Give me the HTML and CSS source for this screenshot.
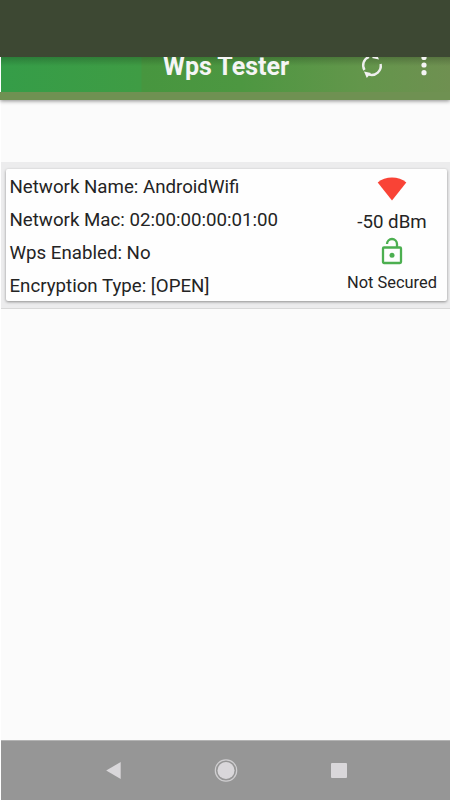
FILE: index.html
```
<!DOCTYPE html>
<html lang="en">
<head>
    <meta charset="UTF-8">
    <meta name="viewport" content="width=device-width, initial-scale=1.0">
    <title>Wps Tester</title>
    <link rel="stylesheet" href="styles.css">
</head>
<body>
    <div class="screen">
        <div class="status-bar"></div>

        <header class="toolbar">
            <div class="toolbar-main">
                <h1>Wps Tester</h1>
                <svg class="refresh-icon" width="28" height="30" viewBox="0 0 28 30">
                    <path class="arc" d="M7.500 19A9 9 0 0 1 12 5.800M23.600 13A9.200 9.200 0 0 1 12 23.600"/>
                    <path class="head" d="M7 20.500L14 22L9.800 27ZM22 8.500L15 7L19.200 2Z"/>
                </svg>
                <svg class="menu-icon" width="6" height="24" viewBox="0 0 6 24">
                    <circle cx="3" cy="4.500" r="2.600"/>
                    <circle cx="3" cy="12" r="2.600"/>
                    <circle cx="3" cy="19.700" r="2.600"/>
                </svg>
            </div>
            <div class="toolbar-strip"></div>
        </header>

        <main class="content">
            <div class="list-item">
                <div class="card">
                    <div class="details">
                        <p>Network Name: AndroidWifi</p>
                        <p>Network Mac: 02:00:00:00:01:00</p>
                        <p>Wps Enabled: No</p>
                        <p>Encryption Type: [OPEN]</p>
                    </div>
                    <div class="signal">
                        <svg class="wifi-icon" width="30" height="24" viewBox="0 0 30 24">
                            <path d="M.7 5.500C4.500 2.200 9.500.5 15 .5s10.500 1.700 14.300 5L15 23.500Z"/>
                        </svg>
                        <p class="level">-50 dBm</p>
                        <svg class="lock-icon" width="22" height="28" viewBox="0 0 22 28">
                            <rect x="2" y="10.500" width="18" height="15.500" rx="1"/>
                            <path d="M6 7A5 5 0 0 1 16 7V10.500"/>
                            <circle cx="11" cy="18.200" r="2.500"/>
                        </svg>
                        <p class="security">Not Secured</p>
                    </div>
                </div>
            </div>
        </main>

        <nav class="nav-bar">
            <svg width="16" height="18" viewBox="0 0 16 18">
                <path d="M1.200 8.500L15.700 0V17Z"/>
            </svg>
            <svg width="24" height="24" viewBox="0 0 24 24">
                <circle class="ring" cx="12" cy="11.500" r="10.700"/>
                <circle cx="12" cy="11.500" r="8.500"/>
            </svg>
            <svg width="16" height="16" viewBox="0 0 16 16">
                <rect width="16" height="15" rx="1"/>
            </svg>
        </nav>
    </div>
</body>
</html>
```
FILE: styles.css
```
* {
    margin: 0;
    padding: 0;
    box-sizing: border-box;
}

body {
    background: #ffffff;
    color: #242424;
    font-family: Roboto, "Liberation Sans", sans-serif;
}

svg {
    display: block;
}

.screen {
    display: flex;
    flex-direction: column;
    height: 800px;
    overflow: hidden;
}

.status-bar {
    height: 57px;
    background: #3d4833;
    flex-shrink: 0;
    z-index: 2;
}

.toolbar {
    height: 43px;
    flex-shrink: 0;
    z-index: 1;
    box-shadow: 0 1px 4px rgba(0, 0, 0, 0.45);
}

.toolbar-main {
    display: flex;
    height: 35px;
    margin-left: 1px;
    padding-left: 162px;
    background:
        linear-gradient(rgba(0, 0, 0, 0.2), rgba(0, 0, 0, 0) 9px),
        linear-gradient(90deg, #359d48 0, #3f9c44 140px, #47963f 141px, #4d9741 240px, #63964b 360px, #6f9051 449px);
}

.toolbar-main h1 {
    width: 127px;
    margin-top: -5px;
    color: #f5f5f5;
    font-size: 25px;
    line-height: 30px;
    font-weight: 700;
    white-space: nowrap;
}

.refresh-icon {
    margin: -6px 0 0 67px;
}

.refresh-icon .arc {
    fill: none;
    stroke: #eeeeee;
    stroke-width: 2.4;
}

.refresh-icon .head {
    fill: #f2f2f2;
}

.menu-icon {
    margin: -4px 0 0 36px;
    fill: #f4f4f4;
}

.toolbar-strip {
    height: 8px;
    background: #6f9152;
}

.content {
    flex: 1;
    margin-left: 1px;
    padding-top: 62px;
    background: #fbfbfb;
}

.list-item {
    height: 147px;
    padding: 7px 3px 8px 5px;
    background: #ececed;
    border-bottom: 1px solid #d8d8d8;
}

.card {
    display: flex;
    justify-content: space-between;
    height: 132px;
    padding: 1px 3px 0 3.5px;
    background: #fefefe;
    border-radius: 2px;
    box-shadow: 0 1px 3px rgba(0, 0, 0, 0.4);
}

.details {
    padding-top: 1px;
}

.details p {
    font-size: 18.7px;
    line-height: 33px;
    white-space: nowrap;
}

.signal {
    display: flex;
    flex-direction: column;
    align-items: center;
    width: 104px;
    padding-top: 7px;
    white-space: nowrap;
}

.wifi-icon {
    fill: #f94336;
}

.level {
    margin-top: 9px;
    font-size: 18.7px;
    line-height: 24px;
}

.lock-icon {
    margin-top: 3px;
    fill: none;
    stroke: #4caf50;
    stroke-width: 2.3;
}

.lock-icon circle {
    fill: #4caf50;
    stroke: none;
}

.security {
    margin-top: 8px;
    font-size: 16.4px;
    line-height: 20px;
}

.nav-bar {
    display: flex;
    align-items: center;
    justify-content: space-between;
    height: 60px;
    margin-left: 1px;
    padding: 1px 103px 0 104px;
    flex-shrink: 0;
    background: #969696;
    border-top: 1px solid #b4b4b4;
    fill: #d9d7da;
}

.nav-bar .ring {
    fill: none;
    stroke: #d0cfd1;
    stroke-width: 1.2;
}
```
